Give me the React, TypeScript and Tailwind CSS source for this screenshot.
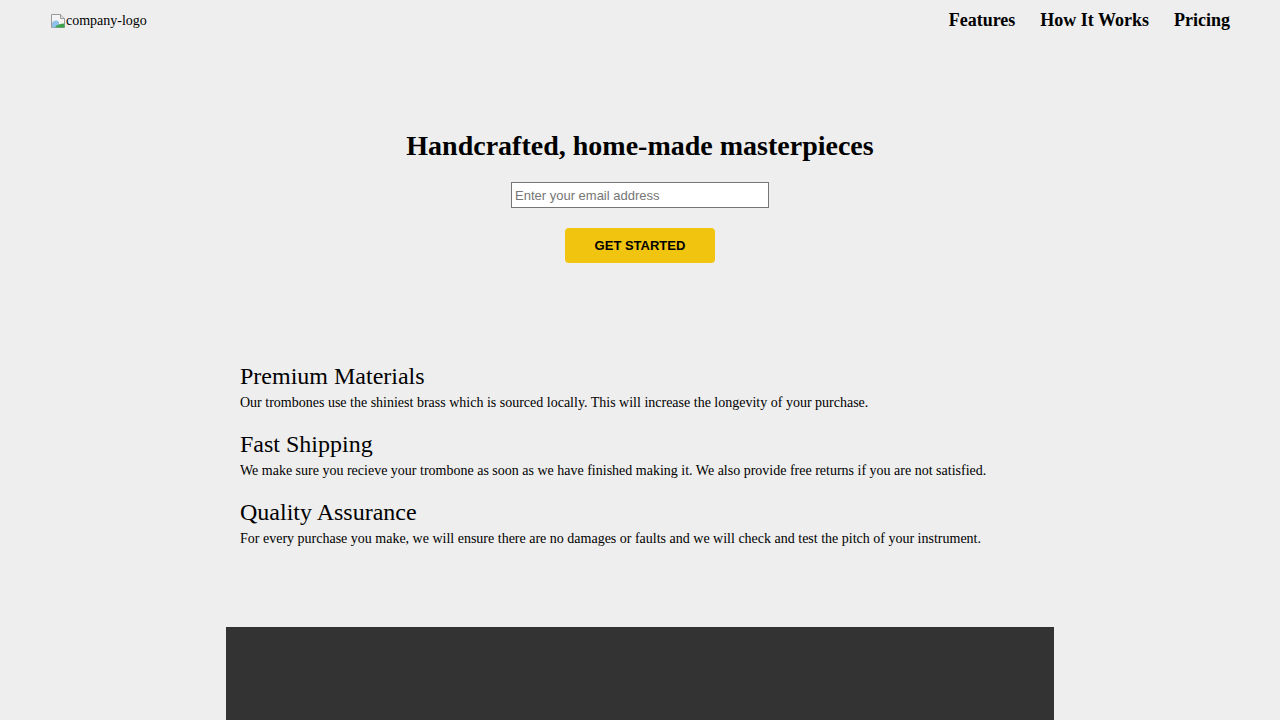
import React from 'react';

const features = [
  {
    title: 'Premium Materials',
    text: 'Our trombones use the shiniest brass which is sourced locally. This will increase the longevity of your purchase.',
  },
  {
    title: 'Fast Shipping',
    text: 'We make sure you recieve your trombone as soon as we have finished making it. We also provide free returns if you are not satisfied.',
  },
  {
    title: 'Quality Assurance',
    text: 'For every purchase you make, we will ensure there are no damages or faults and we will check and test the pitch of your instrument.',
  },
];

function BrokenImage() {
  return (
    <svg width="16" height="16" viewBox="0 0 16 16" className="shrink-0">
      <path d="M1.5 1.5h9l4 4v9h-13z" fill="#f4f4f4" stroke="#9a9a9a" />
      <path d="M10.5 1.5v4h4" fill="#ddd" stroke="#9a9a9a" />
      <path d="M2 10c2-3 5-3 7-1v5.5H2z" fill="#8fc0e8" />
      <path d="M5 14.5c2-3 5-4 9.5-4v4z" fill="#3fa34d" />
    </svg>
  );
}

export default function App() {
  return (
    <div className="min-h-[720px] bg-[#eeeeee] text-black font-['Liberation_Serif',serif]">
      <header className="flex items-center justify-between pl-[50px] pr-[50px] h-[40px]">
        <div className="flex items-center pt-[2px] text-[14px] leading-none">
          <BrokenImage />
          <span>company-logo</span>
        </div>
        <nav className="flex gap-[25px] text-[18px] font-bold">
          <a href="#features">Features</a>
          <a href="#how">How It Works</a>
          <a href="#pricing">Pricing</a>
        </nav>
      </header>

      <section className="flex flex-col items-center pt-[88px]">
        <h1 className="text-[28px] font-bold leading-[36px]">Handcrafted, home-made masterpieces</h1>
        <input
          type="email"
          placeholder="Enter your email address"
          className="mt-[18px] w-[258px] h-[26px] bg-white border border-[#767676] px-[3px] text-[13px] font-['Liberation_Sans',sans-serif] placeholder:text-[#757575]"
        />
        <button className="mt-[20px] w-[150px] h-[35px] rounded-[4px] bg-[#f1c40f] text-[13px] font-bold font-['Liberation_Sans',sans-serif]">
          GET STARTED
        </button>
      </section>

      <section className="w-[800px] mx-auto mt-[99px] flex flex-col gap-[17px]">
        {features.map((f) => (
          <div key={f.title}>
            <h2 className="text-[24px] leading-[28px]">{f.title}</h2>
            <p className="mt-[3px] text-[14px] leading-[20px]">{f.text}</p>
          </div>
        ))}
      </section>

      <div className="w-[828px] mx-auto mt-[78px] h-[100px] bg-[#333333]" />
    </div>
  );
}
